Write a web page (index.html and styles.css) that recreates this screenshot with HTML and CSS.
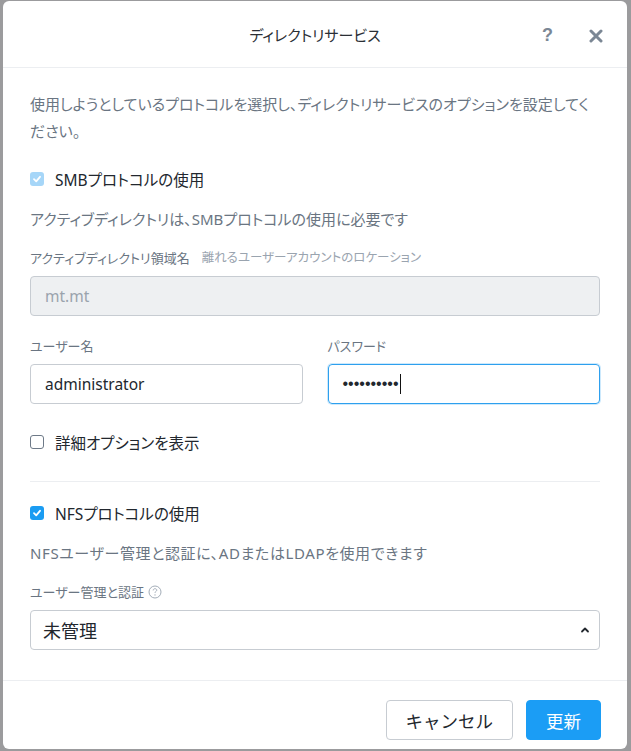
FILE: index.html
```html
<!DOCTYPE html>
<html lang="ja">
<head>
  <meta charset="UTF-8" />
  <meta name="viewport" content="width=device-width, initial-scale=1.0"/>
  <title>ディレクトリサービス</title>
  <link rel="stylesheet" href="styles.css">
</head>
<body>
  <div class="modal">
    <!-- Header -->
    <div class="modal-header">
      <span class="modal-title">ディレクトリサービス</span>
      <div class="header-actions">
        <span class="help">?</span>
        <svg class="close" width="14" height="14" viewBox="0 0 14 14">
          <path d="M2 2 L12 12 M12 2 L2 12" stroke="#7b8795" stroke-width="3" stroke-linecap="round"/>
        </svg>
      </div>
    </div>

    <!-- Body -->
    <div class="modal-body">
      <p class="intro">使用しようとしているプロトコルを選択し、ディレクトリサービスのオプションを設定してく<br>ださい。</p>

      <div class="check-row smb">
        <span class="checkbox checked disabled">
          <svg width="10" height="10" viewBox="0 0 10 10"><path d="M2 5.2 L4.2 7.3 L8 2.8" fill="none" stroke="#fff" stroke-width="1.8" stroke-linecap="round" stroke-linejoin="round"/></svg>
        </span>
        <span class="check-label">SMBプロトコルの使用</span>
      </div>

      <p class="note">アクティブディレクトリは、SMBプロトコルの使用に必要です</p>

      <div class="field">
        <div class="field-label">アクティブディレクトリ領域名<span class="hint">離れるユーザーアカウントのロケーション</span></div>
        <div class="input disabled">mt.mt</div>
      </div>

      <div class="field-pair">
        <div class="field">
          <div class="field-label">ユーザー名</div>
          <div class="input">administrator</div>
        </div>
        <div class="field">
          <div class="field-label">パスワード</div>
          <div class="input focused"><span class="dots">••••••••••</span><span class="caret"></span></div>
        </div>
      </div>

      <div class="check-row detail">
        <span class="checkbox"></span>
        <span class="check-label">詳細オプションを表示</span>
      </div>

      <hr class="divider">

      <div class="check-row nfs">
        <span class="checkbox checked">
          <svg width="10" height="10" viewBox="0 0 10 10"><path d="M2 5.2 L4.2 7.3 L8 2.8" fill="none" stroke="#fff" stroke-width="1.8" stroke-linecap="round" stroke-linejoin="round"/></svg>
        </span>
        <span class="check-label">NFSプロトコルの使用</span>
      </div>

      <p class="note wide">NFSユーザー管理と認証に、ADまたはLDAPを使用できます</p>

      <div class="field">
        <div class="field-label">ユーザー管理と認証
          <svg class="info" width="14" height="14" viewBox="0 0 14 14">
            <circle cx="7" cy="7" r="6" fill="none" stroke="#a3adb8" stroke-width="1"/>
            <path d="M5.2 5.4 C5.2 4.3 6 3.7 7 3.7 C8 3.7 8.8 4.3 8.8 5.2 C8.8 6.3 7 6.4 7 7.8" fill="none" stroke="#a3adb8" stroke-width="1"/>
            <circle cx="7" cy="9.9" r="0.7" fill="#a3adb8"/>
          </svg>
        </div>
        <div class="select">
          <span>未管理</span>
          <svg width="10" height="8" viewBox="0 0 10 8"><path d="M2 5.5 L5 2.5 L8 5.5" fill="none" stroke="#22272e" stroke-width="1.8" stroke-linecap="round" stroke-linejoin="round"/></svg>
        </div>
      </div>
    </div>

    <!-- Footer -->
    <div class="modal-footer">
      <button class="btn">キャンセル</button>
      <button class="btn primary">更新</button>
    </div>
  </div>
</body>
</html>
```

FILE: styles.css
```css
body {
  margin: 0;
  padding: 1px 4px 2px 3px;
  background: #9b9b9d;
  font-family: "Noto Sans", "Noto Sans CJK JP", sans-serif;
  font-feature-settings: "palt";
  color: #22272e;
}

.modal {
  width: 624px;
  height: 748px;
  background: #fff;
  border-radius: 6px;
  display: flex;
  flex-direction: column;
  overflow: hidden;
}

/* Header */
.modal-header {
  height: 66px;
  flex: none;
  display: flex;
  align-items: center;
  justify-content: center;
  position: relative;
  border-bottom: 1px solid #eceef1;
}
.modal-title {
  font-size: 15px;
  color: #2b2f35;
}
.header-actions {
  position: absolute;
  right: 24px;
  top: 24px;
  display: flex;
  align-items: center;
  gap: 36px;
}
.help {
  font-family: "Liberation Sans", sans-serif;
  font-weight: bold;
  font-size: 18px;
  color: #7b8795;
}

/* Body */
.modal-body {
  flex: 1;
  overflow: hidden;
  padding: 23px 27px 0 27px;
}
.intro {
  margin: 0;
  font-size: 15px;
  line-height: 27px;
  color: #6a7582;
}
.note {
  margin: 20px 0 0;
  font-size: 15px;
  line-height: 20px;
  color: #6a7582;
}
.note.wide { letter-spacing: 0.6px; }

.check-row {
  display: flex;
  align-items: center;
  gap: 11px;
  height: 20px;
}
.check-row.smb { margin-top: 24px; }
.check-row.detail { margin-top: 28px; }
.check-row.nfs { margin-top: 21px; }
.check-label {
  font-size: 15.5px;
  color: #22272e;
}
.checkbox {
  width: 14px;
  height: 14px;
  box-sizing: border-box;
  border: 1.5px solid #6e7a88;
  border-radius: 3px;
  display: flex;
  align-items: center;
  justify-content: center;
}
.checkbox.checked {
  border: none;
  background: #1b9cf2;
}
.checkbox.checked.disabled {
  background: #a6d6f8;
}

.field { margin-top: 20px; }
.field-label {
  font-size: 13px;
  line-height: 18px;
  color: #6a7582;
  display: flex;
  align-items: center;
}
.hint {
  color: #9aa4af;
  font-size: 12.5px;
  margin-left: 12px;
}
.info { margin-left: 4px; }

.input, .select {
  margin-top: 9px;
  height: 40px;
  box-sizing: border-box;
  border: 1px solid #c7ccd2;
  border-radius: 4px;
  padding: 0 14px;
  display: flex;
  align-items: center;
  font-size: 15.5px;
  color: #22272e;
}
.input.disabled {
  background: #eef0f2;
  color: #9aa3ad;
}
.input.focused {
  border-color: #2ea0ee;
  box-shadow: 0 0 0 1px #cde9fc;
}
.dots {
  font-family: "Liberation Sans", sans-serif;
  font-size: 16px;
}
.caret {
  width: 1px;
  height: 20px;
  background: #111;
  margin-left: 1px;
}

.field-pair {
  display: grid;
  grid-template-columns: 1fr 1fr;
  gap: 25px;
}
.field-pair .field { margin-top: 21px; }

.divider {
  border: none;
  border-top: 1px solid #eceef1;
  margin: 29px 0 0;
}

.select {
  justify-content: space-between;
  padding: 0 9px 0 12px;
  font-size: 18px;
}

/* Footer */
.modal-footer {
  flex: none;
  border-top: 1px solid #eceef1;
  padding: 19px 26px 9px;
  display: flex;
  justify-content: flex-end;
  gap: 13px;
}
.btn {
  height: 40px;
  padding: 0 19px;
  border: 1px solid #c7ccd2;
  border-radius: 4px;
  background: #fff;
  font-family: "Noto Sans CJK JP", sans-serif;
  font-size: 17.5px;
  color: #22272e;
}
.btn.primary {
  background: #1b9df5;
  border-color: #1b9df5;
  color: #fff;
  padding: 0 19px;
}
```
